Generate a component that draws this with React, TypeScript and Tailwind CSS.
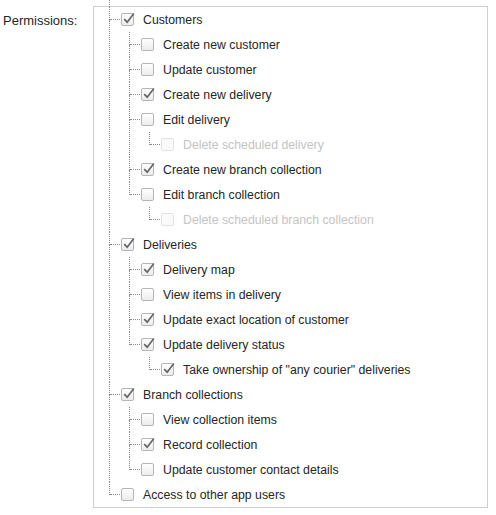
import React from "react";

type N = { label: string; checked?: boolean; disabled?: boolean; children?: N[] };

const tree: N[] = [
  {
    label: "Customers",
    checked: true,
    children: [
      { label: "Create new customer" },
      { label: "Update customer" },
      { label: "Create new delivery", checked: true },
      { label: "Edit delivery", children: [{ label: "Delete scheduled delivery", disabled: true }] },
      { label: "Create new branch collection", checked: true },
      { label: "Edit branch collection", children: [{ label: "Delete scheduled branch collection", disabled: true }] },
    ],
  },
  {
    label: "Deliveries",
    checked: true,
    children: [
      { label: "Delivery map", checked: true },
      { label: "View items in delivery" },
      { label: "Update exact location of customer", checked: true },
      {
        label: "Update delivery status",
        checked: true,
        children: [{ label: 'Take ownership of "any courier" deliveries', checked: true }],
      },
    ],
  },
  {
    label: "Branch collections",
    checked: true,
    children: [
      { label: "View collection items" },
      { label: "Record collection", checked: true },
      { label: "Update customer contact details" },
    ],
  },
  { label: "Access to other app users" },
];

function Box({ checked, disabled }: { checked?: boolean; disabled?: boolean }) {
  return (
    <div
      className={
        disabled
          ? "relative w-[13px] h-[13px] shrink-0 rounded-[2px] border border-[#e2e2e2] bg-[#fafafa]"
          : "relative w-[13px] h-[13px] shrink-0 rounded-[2px] border border-[#b5b5b5] bg-gradient-to-b from-[#ffffff] to-[#ececec]"
      }
    >
      {checked && (
        <svg
          className="absolute left-[0px] top-[-2px] overflow-visible"
          width="13"
          height="13"
          viewBox="0 0 13 13"
        >
          <path d="M2.2 7.2 L5.2 10.2 L11.8 1.6" fill="none" stroke="#666666" strokeWidth="1.7" />
        </svg>
      )}
    </div>
  );
}

function Node({ node, last }: { node: N; last: boolean }) {
  return (
    <div className="flex">
      <div className="w-[12px] shrink-0 flex flex-col">
        <div className="h-[13px] border-l border-dotted border-[#8a8a8a] flex items-end">
          <div className="w-[10px] border-b border-dotted border-[#8a8a8a]" />
        </div>
        {!last && <div className="flex-1 border-l border-dotted border-[#8a8a8a]" />}
      </div>
      <div className="flex flex-col">
        <div className="h-[25px] flex items-center">
          <Box checked={node.checked} disabled={node.disabled} />
          <span
            className={
              node.disabled
                ? "ml-[9px] mt-[2px] text-[12.3px] text-[#c4c4c4] whitespace-nowrap"
                : "ml-[9px] mt-[2px] text-[12.3px] whitespace-nowrap"
            }
          >
            {node.label}
          </span>
        </div>
        {node.children && (
          <div className="pl-[8px] flex flex-col">
            {node.children.map((c, i) => (
              <Node key={c.label} node={c} last={i === node.children!.length - 1} />
            ))}
          </div>
        )}
      </div>
    </div>
  );
}

export default function App() {
  return (
    <div className="w-[496px] h-[515px] bg-white flex pt-[6px] font-['Liberation_Sans',Arial,sans-serif] text-[13px] text-[#262626]">
      <div className="w-[93px] shrink-0 pl-[3px] mt-[2px] h-[25px] flex items-center">Permissions:</div>
      <div className="w-[395px] h-[502px] border border-[#cfcfcf]">
        <div className="-mt-[7px] ml-[15px] flex flex-col">
          <div className="h-[7px] border-l border-dotted border-[#8a8a8a]" />
          {tree.map((n, i) => (
            <Node key={n.label} node={n} last={i === tree.length - 1} />
          ))}
        </div>
      </div>
    </div>
  );
}
